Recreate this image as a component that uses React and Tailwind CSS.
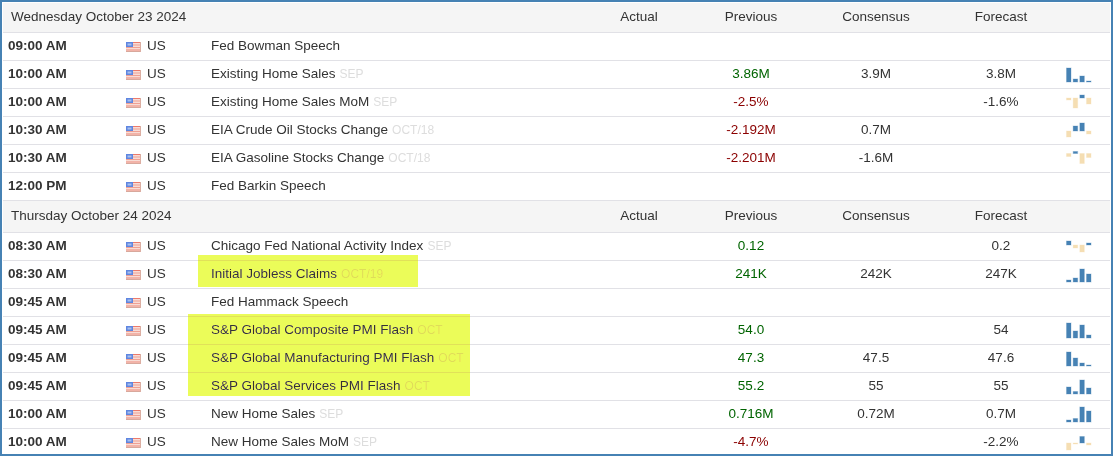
const sections = [
  {
    date: "Wednesday October 23 2024",
    rows: [
      { time: "09:00 AM", name: "Fed Bowman Speech" },
      { time: "10:00 AM", name: "Existing Home Sales", period: "SEP", prev: "3.86M", prevColor: "up", cons: "3.9M", fore: "3.8M", base: 21, bars: [14, 3, 6, 1] },
      { time: "10:00 AM", name: "Existing Home Sales MoM", period: "SEP", prev: "-2.5%", prevColor: "down", fore: "-1.6%", base: 9, bars: [-2, -10, 3, -6] },
      { time: "10:30 AM", name: "EIA Crude Oil Stocks Change", period: "OCT/18", prev: "-2.192M", prevColor: "down", cons: "0.7M", base: 14, bars: [-6, 5, 8, -3] },
      { time: "10:30 AM", name: "EIA Gasoline Stocks Change", period: "OCT/18", prev: "-2.201M", prevColor: "down", cons: "-1.6M", base: 8.5, bars: [-3, 2, -10, -4] },
      { time: "12:00 PM", name: "Fed Barkin Speech" },
    ],
  },
  {
    date: "Thursday October 24 2024",
    rows: [
      { time: "08:30 AM", name: "Chicago Fed National Activity Index", period: "SEP", prev: "0.12", prevColor: "up", fore: "0.2", base: 12, bars: [4, -3, -7, 2] },
      { time: "08:30 AM", name: "Initial Jobless Claims", period: "OCT/19", prev: "241K", prevColor: "up", cons: "242K", fore: "247K", base: 21, bars: [2, 4, 13, 8] },
      { time: "09:45 AM", name: "Fed Hammack Speech" },
      { time: "09:45 AM", name: "S&P Global Composite PMI Flash", period: "OCT", prev: "54.0", prevColor: "up", fore: "54", base: 21, bars: [15, 7, 13, 3] },
      { time: "09:45 AM", name: "S&P Global Manufacturing PMI Flash", period: "OCT", prev: "47.3", prevColor: "up", cons: "47.5", fore: "47.6", base: 21, bars: [14, 8, 3, 1] },
      { time: "09:45 AM", name: "S&P Global Services PMI Flash", period: "OCT", prev: "55.2", prevColor: "up", cons: "55", fore: "55", base: 21, bars: [7, 2.5, 14, 6] },
      { time: "10:00 AM", name: "New Home Sales", period: "SEP", prev: "0.716M", prevColor: "up", cons: "0.72M", fore: "0.7M", base: 21, bars: [2, 3.5, 15, 11] },
      { time: "10:00 AM", name: "New Home Sales MoM", period: "SEP", prev: "-4.7%", prevColor: "down", fore: "-2.2%", base: 14, bars: [-7, -1, 6.5, -2] },
    ],
  },
];

function Flag() {
  return (
    <svg width="15" height="10" viewBox="0 0 15 10" className="mr-[6px] mt-[3px] shrink-0">
      <rect width="15" height="10" fill="#f8dcd5" />
      <rect width="15" height="1" fill="#ec7a6c" />
      <rect y="2.5" width="15" height="1" fill="#f0a093" />
      <rect y="5" width="15" height="1" fill="#f0a093" />
      <rect y="7.5" width="15" height="1" fill="#ec8a7c" />
      <rect y="9" width="15" height="1" fill="#d8a89c" />
      <rect x="14" width="1" height="10" fill="#dcaea2" />
      <rect width="7" height="5" fill="#5f86e0" />
      <rect x="1.5" y="1.5" width="4" height="2" fill="#a8bfee" />
    </svg>
  );
}

// bars hang off a baseline that differs per row, sand ones are negative
function MiniChart({ bars, base }) {
  return (
    <svg width="26" height="27" viewBox="0 0 26 27" className="block">
      {bars.map((b, i) => {
        const h = Math.abs(b);
        const y = b > 0 ? base - h : base;
        const color = b > 0 ? "#4682b4" : "#f5deb3";
        return (
          <rect
            key={i}
            x={i * 6.67 + 0.5}
            y={y}
            width="4.5"
            height={h}
            fill={color}
            stroke={color}
            strokeOpacity="0.3"
          />
        );
      })}
    </svg>
  );
}

function Row({ row }) {
  return (
    <div className="flex h-[28px] items-start border-b border-[#e1e1e6] text-[13.5px] leading-[25px] text-[#333]">
      <div className="w-[123px] pl-[5px] font-bold">{row.time}</div>
      <div className="flex h-[25px] w-[85px] items-center">
        <Flag />
        <span>US</span>
      </div>
      <div className="w-[372px] whitespace-nowrap">
        {row.name}
        {row.period && <span className="ml-[4px] text-[12px] text-[#ddd]">{row.period}</span>}
      </div>
      <div className="w-[112px]" />
      <div className={`w-[112px] text-center ${row.prevColor === "up" ? "text-[#006400]" : "text-[#8b0000]"}`}>{row.prev}</div>
      <div className="ml-[13px] w-[112px] text-center">{row.cons}</div>
      <div className="ml-[13px] w-[112px] text-center">{row.fore}</div>
      <div className="ml-[9px] w-[26px]">{row.bars && <MiniChart bars={row.bars} base={row.base} />}</div>
    </div>
  );
}

function Header({ date, top }) {
  return (
    <div className={`flex items-center border-b border-[#e1e1e6] bg-[#f5f5f5] text-[13.5px] text-[#333] ${top ? "h-[30px]" : "h-[32px]"}`}>
      <div className="w-[580px] pl-[8px]">{date}</div>
      <div className="w-[112px] text-center">Actual</div>
      <div className="w-[112px] text-center">Previous</div>
      <div className="ml-[13px] w-[112px] text-center">Consensus</div>
      <div className="ml-[13px] w-[112px] text-center">Forecast</div>
    </div>
  );
}

export default function App() {
  return (
    <div className="relative h-[456px] w-[1113px] overflow-hidden border-2 border-[#4682b4] bg-white p-px font-['Liberation_Sans',Arial,sans-serif]">
      {sections.map((s, i) => (
        <div key={s.date}>
          <Header date={s.date} top={i === 0} />
          {s.rows.map((r, j) => (
            <Row key={j} row={r} />
          ))}
        </div>
      ))}
      {/* marker highlights drawn over the table */}
      <div className="absolute left-[196px] top-[253px] h-[32px] w-[220px] bg-[#ebfc59] mix-blend-darken" />
      <div className="absolute left-[186px] top-[312px] h-[82px] w-[282px] bg-[#ebfc59] mix-blend-darken" />
    </div>
  );
}
